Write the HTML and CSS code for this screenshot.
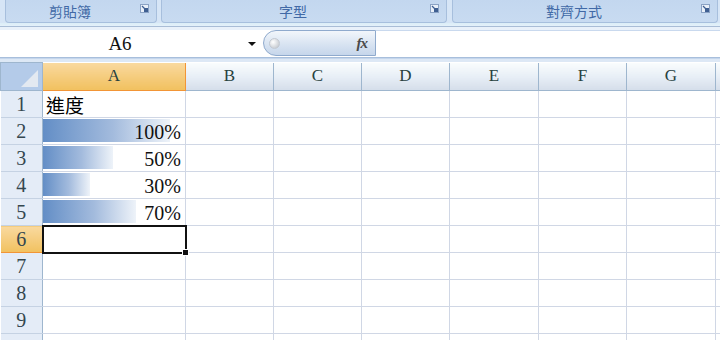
FILE: index.html
```html
<!DOCTYPE html>
<html lang="zh-Hant">

<head>
    <meta charset="UTF-8">
    <title>進度 - Excel</title>
    <link rel="stylesheet" href="styles.css">
</head>

<body>
    <div class="ribbon">
        <div class="group g-clip">
            <span class="g-label">剪貼簿</span>
            <svg class="launcher" width="9" height="9" viewBox="0 0 9 9"><rect x="0.5" y="0.5" width="8" height="8" fill="#e9f0f9" stroke="#8aa2c4"/><rect x="4" y="4" width="4" height="4" fill="#3f5f92"/><path d="M2 2 L5 5" stroke="#3f5f92" stroke-width="1.2"/></svg>
        </div>
        <div class="group g-font">
            <span class="g-label">字型</span>
            <svg class="launcher" width="9" height="9" viewBox="0 0 9 9"><rect x="0.5" y="0.5" width="8" height="8" fill="#e9f0f9" stroke="#8aa2c4"/><rect x="4" y="4" width="4" height="4" fill="#3f5f92"/><path d="M2 2 L5 5" stroke="#3f5f92" stroke-width="1.2"/></svg>
        </div>
        <div class="group g-align">
            <span class="g-label">對齊方式</span>
            <svg class="launcher" width="9" height="9" viewBox="0 0 9 9"><rect x="0.5" y="0.5" width="8" height="8" fill="#e9f0f9" stroke="#8aa2c4"/><rect x="4" y="4" width="4" height="4" fill="#3f5f92"/><path d="M2 2 L5 5" stroke="#3f5f92" stroke-width="1.2"/></svg>
        </div>
    </div>
    <div class="ribbon-foot"></div>

    <div class="formula-bar">
        <div class="name-box">
            <span class="name-text">A6</span>
            <span class="name-arrow"></span>
        </div>
        <div class="fx-pill">
            <span class="pill-dot"></span>
            <span class="fx">fx</span>
        </div>
        <div class="formula-input"></div>
    </div>
    <div class="sheet-gap"></div>

    <table class="sheet">
        <colgroup>
            <col style="width:42px">
            <col style="width:143px">
            <col style="width:88px">
            <col style="width:88px">
            <col style="width:88px">
            <col style="width:89px">
            <col style="width:88px">
            <col style="width:89px">
            <col style="width:88px">
        </colgroup>
        <thead>
            <tr>
                <th class="corner"><span class="corner-tri"></span></th>
                <th class="col-head on">A</th>
                <th class="col-head">B</th>
                <th class="col-head">C</th>
                <th class="col-head">D</th>
                <th class="col-head">E</th>
                <th class="col-head">F</th>
                <th class="col-head">G</th>
                <th class="col-head"></th>
            </tr>
        </thead>
        <tbody>
            <tr>
                <th class="row-head">1</th>
                <td class="txt">進度</td>
                <td></td><td></td><td></td><td></td><td></td><td></td><td></td>
            </tr>
            <tr>
                <th class="row-head">2</th>
                <td class="num"><div class="bar" style="width:127px"></div><span class="val">100%</span></td>
                <td></td><td></td><td></td><td></td><td></td><td></td><td></td>
            </tr>
            <tr>
                <th class="row-head">3</th>
                <td class="num"><div class="bar" style="width:70px"></div><span class="val">50%</span></td>
                <td></td><td></td><td></td><td></td><td></td><td></td><td></td>
            </tr>
            <tr>
                <th class="row-head">4</th>
                <td class="num"><div class="bar" style="width:47px"></div><span class="val">30%</span></td>
                <td></td><td></td><td></td><td></td><td></td><td></td><td></td>
            </tr>
            <tr>
                <th class="row-head">5</th>
                <td class="num"><div class="bar" style="width:93px"></div><span class="val">70%</span></td>
                <td></td><td></td><td></td><td></td><td></td><td></td><td></td>
            </tr>
            <tr>
                <th class="row-head on">6</th>
                <td class="active"><span class="fill-handle"></span></td>
                <td></td><td></td><td></td><td></td><td></td><td></td><td></td>
            </tr>
            <tr>
                <th class="row-head">7</th>
                <td></td><td></td><td></td><td></td><td></td><td></td><td></td><td></td>
            </tr>
            <tr>
                <th class="row-head">8</th>
                <td></td><td></td><td></td><td></td><td></td><td></td><td></td><td></td>
            </tr>
            <tr>
                <th class="row-head">9</th>
                <td></td><td></td><td></td><td></td><td></td><td></td><td></td><td></td>
            </tr>
            <tr>
                <th class="row-head"></th>
                <td></td><td></td><td></td><td></td><td></td><td></td><td></td><td></td>
            </tr>
        </tbody>
    </table>
</body>

</html>
```

FILE: styles.css
```css
body {
    margin: 0;
    width: 720px;
    height: 340px;
    overflow: hidden;
    background-color: #ffffff;
    font-family: 'Liberation Serif', 'Times New Roman', serif;
}

/* ribbon */
.ribbon {
    display: flex;
    height: 23px;
    padding-left: 5px;
    gap: 4px;
    background-color: #d6e5f6;
}

.group {
    position: relative;
    display: flex;
    align-items: center;
    background: linear-gradient(#c3d7ef, #c8dbf1);
    border: 1px solid #a7bfdd;
    border-top: none;
    border-radius: 0 0 4px 4px;
    box-sizing: border-box;
    height: 23px;
}

.g-clip {
    width: 152px;
}

.g-font {
    width: 286px;
}

.g-align {
    width: 266px;
    margin-left: 1px;
}

.g-label {
    flex: 1;
    text-align: center;
    padding-right: 22px;
    font-family: 'Noto Sans CJK TC', sans-serif;
    font-size: 14px;
    color: #4169a6;
    line-height: 20px;
    margin-top: -1px;
}

.launcher {
    position: absolute;
    right: 7px;
    top: 4px;
}

.ribbon-foot {
    height: 7px;
    background: linear-gradient(#dbeef7 0, #e4f0fa 3px, #a9bdd6 3px, #a9bdd6 4px, #e9f1fa 4px, #e9f1fa 7px);
}

/* formula bar */
.formula-bar {
    display: flex;
    height: 27px;
    background-color: #ffffff;
}

.name-box {
    display: flex;
    align-items: center;
    width: 263px;
}

.name-text {
    width: 240px;
    text-align: center;
    font-size: 19px;
    color: #111;
}

.name-arrow {
    width: 0;
    height: 0;
    margin-left: 8px;
    border-left: 4px solid transparent;
    border-right: 4px solid transparent;
    border-top: 4px solid #111;
}

.fx-pill {
    display: flex;
    align-items: center;
    justify-content: space-between;
    width: 113px;
    height: 26px;
    box-sizing: border-box;
    padding: 0 8px 0 5px;
    background: linear-gradient(#f2f6fb, #d6e2f1 60%, #c6d6eb);
    border: 1px solid #8faacd;
    border-radius: 13px 0 0 13px;
}

.pill-dot {
    width: 9px;
    height: 9px;
    border-radius: 50%;
    background: radial-gradient(circle at 35% 35%, #ffffff, #b9bec6);
    border: 1px solid #c3c9d2;
}

.fx {
    font-style: italic;
    font-weight: bold;
    font-size: 15px;
    color: #4a4a4a;
    letter-spacing: -1px;
}

.formula-input {
    flex: 1;
    background-color: #ffffff;
    border-top: 1px solid #c9d9ee;
}

.sheet-gap {
    height: 5px;
    background: linear-gradient(#a8bfdc 0, #a8bfdc 1px, #c5d6ec 1px, #c5d6ec 2px, #dde8f5 2px);
}

/* grid */
.sheet {
    border-collapse: collapse;
    table-layout: fixed;
    width: 799px;
}

.sheet th,
.sheet td {
    padding: 0;
    height: 26px;
    border: 1px solid #d0d7e5;
}

.sheet thead th {
    height: 27px;
}

.corner {
    position: relative;
    background-color: #b4cbe9;
    border: 1px solid #9eb6ce !important;
}

.corner-tri {
    position: absolute;
    right: 4px;
    bottom: 3px;
    width: 0;
    height: 0;
    border-left: 17px solid transparent;
    border-bottom: 17px solid #e3e9f1;
}

.col-head {
    font-weight: normal;
    font-size: 17px;
    color: #27413e;
    background: linear-gradient(#f9fcfd, #e6edf5 55%, #d5deea);
    border: 1px solid #9eb6ce !important;
    border-top: none !important;
}

.col-head.on {
    background: linear-gradient(#f9d99f, #f4ca78 60%, #f1c15f);
    border-color: #f29536 !important;
    border-left-color: #9eb6ce !important;
}

.row-head {
    font-weight: normal;
    font-size: 20px;
    color: #34474f;
    background-color: #e4ecf7;
    border: 1px solid #c5d2e3 !important;
    border-right-color: #9eb6ce !important;
    border-left: none !important;
}

.row-head.on {
    background: linear-gradient(#f9d99f, #f1c15f);
    border-color: #f29536 !important;
}

.txt {
    font-family: 'Noto Sans CJK TC', sans-serif;
    font-size: 19px;
    padding-left: 3px !important;
    vertical-align: bottom;
    line-height: 24px;
}

.num {
    position: relative;
    text-align: right;
    vertical-align: bottom;
    font-size: 20px;
    line-height: 24px;
}

.bar {
    position: absolute;
    left: 0;
    top: 1px;
    bottom: 2px;
    background: linear-gradient(90deg, #638ec6, #a3bbdd 55%, #eef3f9);
}

.val {
    position: relative;
    padding-right: 4px;
    color: #111;
}

.active {
    position: relative;
    outline: 2px solid #111;
    outline-offset: -1px;
}

.fill-handle {
    position: absolute;
    right: -4px;
    bottom: -4px;
    width: 5px;
    height: 5px;
    background-color: #111;
    border: 1px solid #ffffff;
}
```
